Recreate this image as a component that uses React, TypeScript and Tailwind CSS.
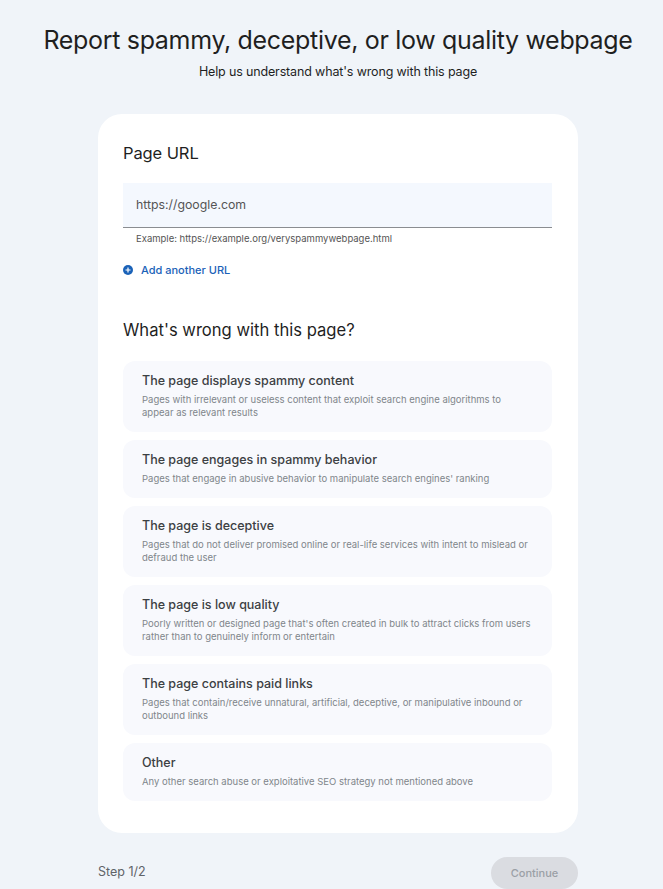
const options = [
  { t: "The page displays spammy content", d: "Pages with irrelevant or useless content that exploit search engine algorithms to appear as relevant results" },
  { t: "The page engages in spammy behavior", d: "Pages that engage in abusive behavior to manipulate search engines' ranking" },
  { t: "The page is deceptive", d: "Pages that do not deliver promised online or real-life services with intent to mislead or defraud the user" },
  { t: "The page is low quality", d: "Poorly written or designed page that's often created in bulk to attract clicks from users rather than to genuinely inform or entertain" },
  { t: "The page contains paid links", d: "Pages that contain/receive unnatural, artificial, deceptive, or manipulative inbound or outbound links" },
  { t: "Other", d: "Any other search abuse or exploitative SEO strategy not mentioned above" },
];

export default function App() {
  return (
    <div className="h-[889px] w-[663px] overflow-hidden bg-[#f0f4f9] font-['Inter',sans-serif] text-[#1f1f1f]">
      <div className="w-[676px]">
        <h1 className="pt-[24px] text-center text-[25px] leading-[32px] font-normal tracking-[-0.32px] whitespace-nowrap">
          Report spammy, deceptive, or low quality webpage
        </h1>
        <p className="mt-[8px] text-center text-[12.5px] leading-[16px] tracking-[-0.15px]">Help us understand what's wrong with this page</p>
        <div className="mx-auto mt-[34px] h-[719px] w-[480px] rounded-[24px] bg-white pr-[26px] pl-[25px] pt-[27px]">
          <h2 className="text-[16.5px] leading-[24px] font-normal tracking-[-0.1px]">Page URL</h2>
          <div className="mt-[18px] flex h-[45px] items-center border-b border-[#8a8d91] bg-[#f4f8fe] pl-[13px] text-[12.3px] text-[#555]">
            https://google.com
          </div>
          <p className="mt-[5px] pl-[13px] text-[9.5px] leading-[12px] text-[#555]">
            Example: https://example.org/veryspammywebpage.html
          </p>
          <div className="mt-[17px] flex items-center gap-[8px] text-[11px] leading-[16px] font-medium text-[#1a62b8]">
            <svg width="10" height="10" viewBox="0 0 10 10" aria-hidden="true">
              <circle cx="5" cy="5" r="5" fill="#1a62b8" />
              <path d="M5 2.5v5M2.5 5h5" stroke="#fff" strokeWidth="1.2" />
            </svg>
            Add another URL
          </div>
          <h2 className="mt-[40px] text-[16.6px] leading-[24px] font-normal">What's wrong with this page?</h2>
          <div className="mt-[19px] flex flex-col gap-[8px]">
            {options.map((o) => (
              <div key={o.t} className="rounded-[12px] bg-[#f8f9fd] px-[19px] pt-[11px] pb-[13px]">
                <div className="text-[12.5px] leading-[18px] font-medium text-[#3c4043]">{o.t}</div>
                <div className="mt-[3px] text-[9.5px] leading-[13px] text-[#80868b]">{o.d}</div>
              </div>
            ))}
          </div>
        </div>
        <div className="mx-auto mt-[24px] flex w-[480px] items-start justify-between">
          <span className="mt-[7px] text-[12.5px] leading-[16px] text-[#5f6368]">Step 1/2</span>
          <div className="flex h-[32px] w-[87px] items-center justify-center rounded-full bg-[#dadce1] text-[11px] font-medium text-[#9aa0a6]">
            Continue
          </div>
        </div>
      </div>
    </div>
  );
}
